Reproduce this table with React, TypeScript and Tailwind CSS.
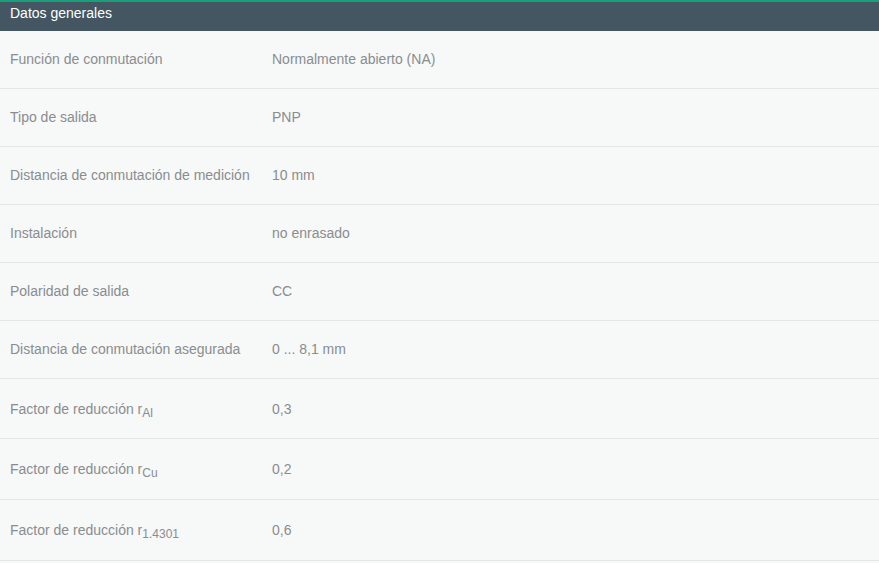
const rows: { label: React.ReactNode; value: string; tall?: string }[] = [
  { label: "Función de conmutación", value: "Normalmente abierto (NA)" },
  { label: "Tipo de salida", value: "PNP" },
  { label: "Distancia de conmutación de medición", value: "10 mm" },
  { label: "Instalación", value: "no enrasado" },
  { label: "Polaridad de salida", value: "CC" },
  { label: "Distancia de conmutación asegurada", value: "0 ... 8,1 mm" },
  { label: <>Factor de reducción r<sub className="text-[12px]">Al</sub></>, value: "0,3", tall: "pt-[22px] pb-5" },
  { label: <>Factor de reducción r<sub className="text-[12px]">Cu</sub></>, value: "0,2", tall: "pt-[22px] pb-[21px]" },
  { label: <>Factor de reducción r<sub className="text-[12px]">1.4301</sub></>, value: "0,6", tall: "pt-[22px] pb-[21px]" },
];

export default function App() {
  return (
    <div className="h-[563px] w-[879px] overflow-hidden bg-[#f7f8f8] font-['Liberation_Sans',Arial,sans-serif] text-[14px]">
      <div className="flex h-[2px]">
        <div className="w-[110px] bg-[#17a07a]" />
        <div className="w-px bg-[#4d8a7c]" />
        <div className="w-[412px] bg-[#17a07a]" />
        <div className="w-px bg-[#4d8a7c]" />
        <div className="flex-1 bg-[#17a07a]" />
      </div>
      <div className="h-[29px] bg-[#435662] pl-[10px] pt-[2px] leading-[18px] text-white">Datos generales</div>
      <table className="w-full border-collapse text-[#8a8d8f]">
        <tbody>
          {rows.map((r, i) => (
            <tr key={i} className="border-b border-[#e4e6e6]">
              <td className={`w-[262px] pl-[10px] leading-[17px] ${r.tall ?? "py-5"}`}>{r.label}</td>
              <td className={`pl-[10px] leading-[17px] ${r.tall ?? "py-5"}`}>{r.value}</td>
            </tr>
          ))}
        </tbody>
      </table>
    </div>
  );
}
